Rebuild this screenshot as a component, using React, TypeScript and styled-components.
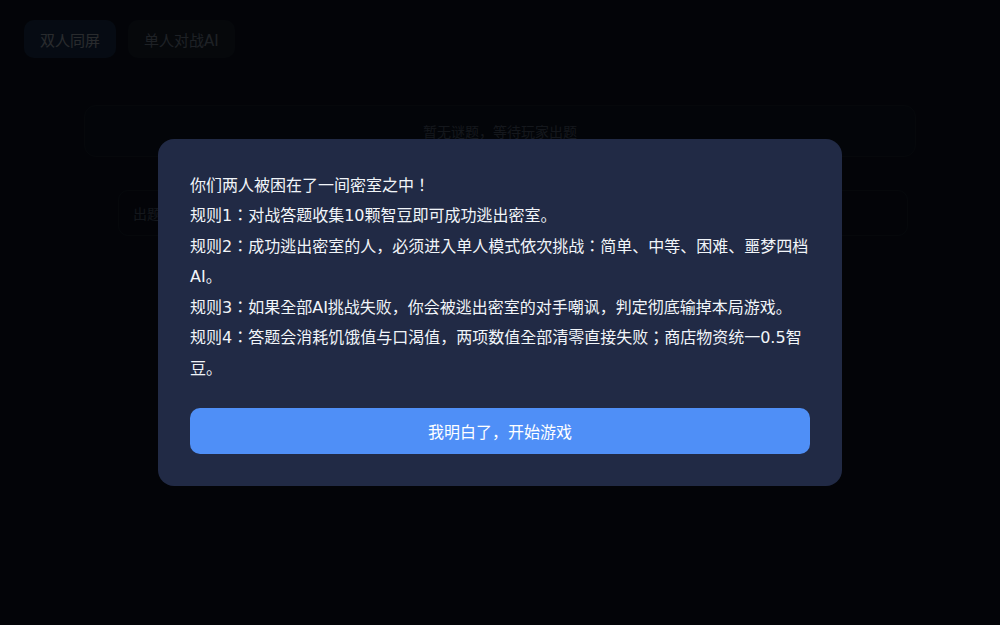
import React from 'react';
import styled, { createGlobalStyle } from 'styled-components';

const GlobalStyle = createGlobalStyle`
  html, body {
    margin: 0;
    padding: 0;
    background: #0f172a;
    font-family: "DejaVu Sans", "Noto Sans CJK KR", sans-serif;
  }
  * { box-sizing: border-box; }
`;

const Page = styled.div`
  width: 100vw;
  height: 100vh;
  background: #0f172a;
  padding: 20px 24px;
  display: flex;
  flex-direction: column;
`;

const Tabs = styled.div`
  display: flex;
  gap: 12px;
`;

const Tab = styled.button<{ $active?: boolean }>`
  height: 38px;
  padding: 0 16px;
  border: 0;
  border-radius: 10px;
  background: ${(p) => (p.$active ? '#1e3a5f' : '#1e293b')};
  color: ${(p) => (p.$active ? '#cbd5e1' : '#94a3b8')};
  font-family: inherit;
  font-size: 15px;
`;

const Board = styled.div`
  margin: 47px 60px 0;
  height: 52px;
  border-radius: 12px;
  background: #111a2e;
  border: 1px solid #1e293b;
  color: #64748b;
  font-size: 14px;
  display: flex;
  align-items: center;
  justify-content: center;
`;

const InputRow = styled.div`
  margin: 33px 68px 0 94px;
  height: 46px;
  border-radius: 10px;
  border: 1px solid #1e293b;
  background: #0f172a;
  display: flex;
  align-items: center;
  padding: 0 14px;
  color: #64748b;
  font-size: 14px;
`;

const Overlay = styled.div`
  position: fixed;
  inset: 0;
  background: rgba(0, 0, 0, 0.8);
  display: flex;
  align-items: center;
  justify-content: center;
`;

const Modal = styled.div`
  width: 684px;
  background: #212a45;
  border-radius: 16px;
  padding: 32px;
  color: #f1f5f9;
`;

const Line = styled.p`
  margin: 0;
  font-size: 16px;
  line-height: 30.4px;
`;

const Confirm = styled.button`
  margin-top: 24px;
  width: 100%;
  height: 46px;
  border: 0;
  border-radius: 10px;
  background: #4f8ff7;
  color: #ffffff;
  font-family: inherit;
  font-size: 16px;
  cursor: pointer;
`;

const rules = [
  '你们两人被困在了一间密室之中！',
  '规则1：对战答题收集10颗智豆即可成功逃出密室。',
  '规则2：成功逃出密室的人，必须进入单人模式依次挑战：简单、中等、困难、噩梦四档AI。',
  '规则3：如果全部AI挑战失败，你会被逃出密室的对手嘲讽，判定彻底输掉本局游戏。',
  '规则4：答题会消耗饥饿值与口渴值，两项数值全部清零直接失败；商店物资统一0.5智豆。',
];

export default function App() {
  return (
    <>
      <GlobalStyle />
      <Page>
        <Tabs>
          <Tab $active>双人同屏</Tab>
          <Tab>单人对战AI</Tab>
        </Tabs>
        <Board>暂无谜题，等待玩家出题</Board>
        <InputRow>出题...</InputRow>
      </Page>
      <Overlay>
        <Modal>
          {rules.map((r) => (
            <Line key={r}>{r}</Line>
          ))}
          <Confirm type="button">我明白了，开始游戏</Confirm>
        </Modal>
      </Overlay>
    </>
  );
}
